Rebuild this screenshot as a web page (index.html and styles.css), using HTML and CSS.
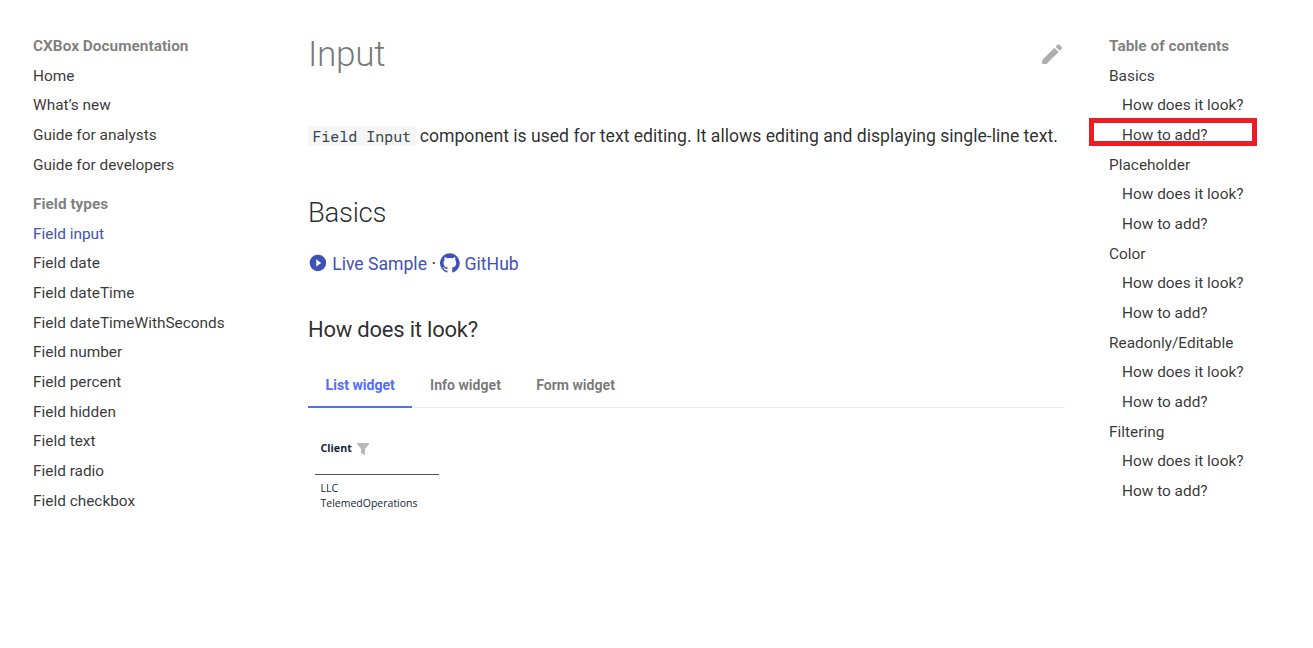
FILE: index.html
```html
<!DOCTYPE html>
<html lang="en">
<head>
<meta charset="utf-8">
<title>Input - CXBox Documentation</title>
<link rel="stylesheet" href="styles.css">
</head>
<body>
<div class="page">
  <nav class="sidebar">
    <div class="nav-title">CXBox Documentation</div>
    <ul class="nav-list">
      <li>Home</li>
      <li>What’s new</li>
      <li>Guide for analysts</li>
      <li>Guide for developers</li>
    </ul>
    <div class="nav-title nav-section">Field types</div>
    <ul class="nav-list">
      <li class="active">Field input</li>
      <li>Field date</li>
      <li>Field dateTime</li>
      <li>Field dateTimeWithSeconds</li>
      <li>Field number</li>
      <li>Field percent</li>
      <li>Field hidden</li>
      <li>Field text</li>
      <li>Field radio</li>
      <li>Field checkbox</li>
    </ul>
  </nav>
  <main class="content">
    <header class="content-head">
      <h1>Input</h1>
      <svg class="edit" viewBox="0 0 24 24"><path d="M20.71 7.04c.39-.39.39-1.04 0-1.41l-2.34-2.34c-.37-.39-1.02-.39-1.41 0l-1.84 1.83 3.75 3.75M3 17.25V21h3.75L17.81 9.93l-3.75-3.75L3 17.25z"/></svg>
    </header>
    <p class="intro"><code>Field Input</code> <span class="intro-text">component is used for text editing. It allows editing and displaying single-line text.</span></p>
    <h2>Basics</h2>
    <p class="links">
      <a><svg class="icon icon-play" viewBox="0 0 24 24"><path d="M12 2a10 10 0 1 0 0 20 10 10 0 0 0 0-20zM10 16.5v-9l6 4.5-6 4.5z"/></svg><span>Live Sample</span></a>
      <span class="dot">·</span>
      <a><svg class="icon icon-github" viewBox="0 0 24 24"><path d="M12 .3a12 12 0 0 0-3.8 23.38c.6.12.83-.26.83-.57L9 21.07c-3.34.72-4.04-1.61-4.04-1.61-.55-1.39-1.34-1.76-1.34-1.76-1.08-.74.09-.73.09-.73 1.2.09 1.83 1.24 1.83 1.24 1.08 1.83 2.81 1.3 3.5 1 .1-.78.42-1.31.76-1.61-2.67-.3-5.47-1.33-5.47-5.93 0-1.31.47-2.38 1.24-3.22-.14-.3-.54-1.52.1-3.18 0 0 1-.32 3.3 1.23a11.5 11.5 0 0 1 6 0c2.28-1.55 3.29-1.23 3.29-1.23.64 1.66.24 2.88.12 3.18a4.65 4.65 0 0 1 1.23 3.22c0 4.61-2.8 5.63-5.48 5.92.42.36.81 1.1.81 2.22l-.01 3.29c0 .31.2.69.82.57A12 12 0 0 0 12 .3z"/></svg><span>GitHub</span></a>
    </p>
    <h3>How does it look?</h3>
    <div class="tabs">
      <span class="tab selected">List widget</span>
      <span class="tab">Info widget</span>
      <span class="tab">Form widget</span>
    </div>
    <div class="widget">
      <div class="widget-head">
        <span>Client</span>
        <svg class="filter" viewBox="0 0 12 12"><path d="M0 0h12v1L8 6v6L4 10V6L0 1z"/></svg>
      </div>
      <div class="widget-cell">LLC<br>TelemedOperations</div>
    </div>
  </main>
  <aside class="toc">
    <div class="nav-title">Table of contents</div>
    <ul class="nav-list">
      <li>Basics</li>
      <li class="sub">How does it look?</li>
      <li class="sub marked">How to add?</li>
      <li>Placeholder</li>
      <li class="sub">How does it look?</li>
      <li class="sub">How to add?</li>
      <li>Color</li>
      <li class="sub">How does it look?</li>
      <li class="sub">How to add?</li>
      <li>Readonly/Editable</li>
      <li class="sub">How does it look?</li>
      <li class="sub">How to add?</li>
      <li>Filtering</li>
      <li class="sub">How does it look?</li>
      <li class="sub">How to add?</li>
      <li class="last">Drilldown</li>
    </ul>
  </aside>
</div>
</body>
</html>
```
FILE: styles.css
```css
*, *::after { box-sizing: border-box; }
body { margin: 0; background: #fff; font-family: Roboto, "Liberation Sans", sans-serif; color: rgba(0,0,0,.84); }
h1, h2, h3, p, ul { margin: 0; padding: 0; }
.page { display: grid; grid-template-columns: 275px 757px 1fr; column-gap: 0; padding: 0 0 0 33px; height: 514px; overflow: hidden; }
.sidebar, .toc { padding-top: 36.1px; font-size: 15.4px; line-height: 20.02px; white-space: nowrap; color: rgba(0,0,0,.8); }
.toc { padding-left: 44px; }
.nav-title { font-weight: 700; color: rgba(0,0,0,.52); }
.nav-list { list-style: none; }
.nav-list li { margin-top: 9.645px; }
.nav-section { margin-top: 19.24px; }
.nav-list .active { color: #4051b5; }
.nav-list .last { margin-top: 8.6px; }
.sub { padding-left: 13px; }
.marked { position: relative; }
.marked::after { content: ""; position: absolute; left: -20px; top: -7px; width: 168px; height: 28px; border: 5px solid #ed1c24; }

.content { padding-top: 31px; }
.content-head { display: flex; justify-content: space-between; height: 46px; }
h1 { font-size: 35.2px; line-height: 46px; font-weight: 300; letter-spacing: -.352px; color: rgba(0,0,0,.54); }
.edit { width: 26.4px; height: 26.4px; margin-top: 10px; fill: #adadad; }
.intro { display: flex; align-items: center; height: 28px; margin-top: 45px; font-size: 17.6px; white-space: nowrap; }
code { font: 14.96px/20px "Roboto Mono", "Liberation Mono", monospace; color: #36464e; background: #f5f5f5; padding: 0 4.4px; border-radius: 2px; margin-right: 4.3px; }
h2 { margin-top: 44px; font-size: 27.5px; line-height: 38px; font-weight: 300; letter-spacing: -.275px; }
.links { display: flex; align-items: center; height: 28px; margin-top: 18px; font-size: 17.6px; }
.links a { display: flex; align-items: center; gap: 4.4px; color: #4051b5; }
.icon { width: 19.8px; height: 19.8px; margin-top: -2px; fill: currentColor; }
.dot { margin: 0 4.4px; }
h3 { margin-top: 35px; font-size: 22px; line-height: 33px; font-weight: 400; letter-spacing: -.22px; }
.tabs { display: flex; margin-top: 16px; height: 46px; box-shadow: inset 0 -1px #ededed; font-size: 14.08px; font-weight: 700; line-height: 22px; color: rgba(0,0,0,.54); }
.tab { padding: 12px 17.6px 0; border-bottom: 2px solid transparent; }
.selected { color: #526cfe; border-color: #526cfe; }
.widget { width: 124px; margin: 26px 0 0 7px; font: 10.5px/15px "Open Sans", sans-serif; color: #141f35; }
.widget-head { display: flex; align-items: center; height: 41px; gap: 5px; padding: 0 0 12px 5.5px; border-bottom: 1px solid #555; font-size: 10.7px; font-weight: 700; }
.filter { width: 12px; height: 12px; margin-top: 2px; fill: #b8b8b8; }
.widget-cell { padding: 6px 0 0 5.5px; }
```
